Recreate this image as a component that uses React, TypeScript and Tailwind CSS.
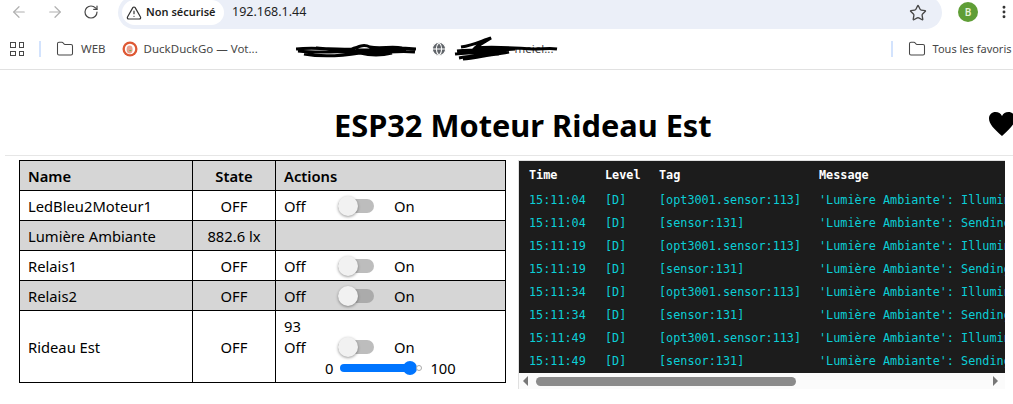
import React from "react";
import { ArrowLeft, ArrowRight, RotateCw, TriangleAlert, Star, Folder, EllipsisVertical, Globe } from "lucide-react";

const logRows = [
  ["15:11:04", "[opt3001.sensor:113]", "'Lumière Ambiante': Illumination"],
  ["15:11:04", "[sensor:131]", "'Lumière Ambiante': Sending state"],
  ["15:11:19", "[opt3001.sensor:113]", "'Lumière Ambiante': Illumination"],
  ["15:11:19", "[sensor:131]", "'Lumière Ambiante': Sending state"],
  ["15:11:34", "[opt3001.sensor:113]", "'Lumière Ambiante': Illumination"],
  ["15:11:34", "[sensor:131]", "'Lumière Ambiante': Sending state"],
  ["15:11:49", "[opt3001.sensor:113]", "'Lumière Ambiante': Illumination"],
  ["15:11:49", "[sensor:131]", "'Lumière Ambiante': Sending state"],
];

function ScribbleOne() {
  return (
    <svg width="120" height="28" viewBox="0 0 120 28" className="shrink-0">
      <path
        d="M0 14 C20 12 38 15 56 14 C64 11 68 9 74 12 C84 14 96 11 106 13 L120 14 M2 16 C30 19 50 15 70 17 C85 19 100 15 119 17 M8 19 C25 22 45 21 64 18 C72 20 84 21 96 18 M20 13 L60 16 M60 15 L110 15"
        fill="none"
        stroke="#000"
        strokeWidth="3"
      />
    </svg>
  );
}

function ScribbleTwo() {
  return (
    <svg width="108" height="30" viewBox="0 0 108 30" className="relative z-10 shrink-0">
      <path
        d="M8 13 C22 11 30 6 38 4 C30 9 24 12 22 14 C40 12 60 14 80 15 C90 15 98 14 104 15 M4 17 C24 15 44 17 62 15 M2 20 C20 18 40 19 56 18 C40 21 20 22 10 25 C22 24 34 21 46 20 M6 24 C16 22 26 22 34 21"
        fill="none"
        stroke="#000"
        strokeWidth="3"
      />
    </svg>
  );
}

function Toggle({ shaded }: { shaded?: boolean }) {
  return (
    <span className="relative ml-[34px] mr-[20px] inline-flex h-[20px] w-[36px] shrink-0 items-center">
      <span className={shaded ? "h-[14px] w-full rounded-full bg-[#ababab]" : "h-[14px] w-full rounded-full bg-[#bdbdbd]"} />
      <span className="absolute left-0 top-0 h-[20px] w-[20px] rounded-full bg-[#f1f1f1] shadow-[0_1px_3px_rgba(0,0,0,0.4)]" />
    </span>
  );
}

function Actions({ shaded }: { shaded?: boolean }) {
  return (
    <div className="flex items-center">
      <span className="w-[20px]">Off</span>
      <Toggle shaded={shaded} />
      <span>On</span>
    </div>
  );
}

const cell = "border border-black px-2 pt-[1px] h-[30px]";

export default function App() {
  return (
    <div className="h-[404px] w-[1013px] overflow-hidden bg-white font-['Noto_Sans',sans-serif] text-black">
      {/* Browser toolbar */}
      <div className="flex h-[29px] items-center overflow-hidden pb-[5px]">
        <ArrowLeft className="ml-[10px] h-[18px] w-[18px] text-[#b0b0b0]" strokeWidth={1.6} />
        <ArrowRight className="ml-[18px] h-[18px] w-[18px] text-[#b0b0b0]" strokeWidth={1.6} />
        <RotateCw className="ml-[19px] h-[16px] w-[16px] text-[#474747]" strokeWidth={1.8} />
        <div className="ml-[19px] -mt-[4px] flex h-[33px] w-[824px] items-center self-start rounded-full bg-[#ebeff8]">
          <div className="ml-[4px] flex h-[25px] w-[102px] items-center rounded-full bg-white pl-[4px]">
            <TriangleAlert className="h-[16px] w-[16px] text-[#333]" strokeWidth={1.8} />
            <span className="ml-[4px] whitespace-nowrap text-[11px] font-semibold text-[#1f1f1f]">Non sécurisé</span>
          </div>
          <span className="ml-[8px] text-[12.5px] text-[#1f1f1f]">192.168.1.44</span>
          <Star className="ml-auto mr-[15px] h-[18px] w-[18px] text-[#474747]" strokeWidth={1.8} />
        </div>
        <div className="ml-[16px] flex h-[20px] w-[20px] items-center justify-center rounded-full bg-[#5f9e36] text-[10px] font-semibold text-[#e6f4d8]">
          B
        </div>
        <EllipsisVertical className="ml-[18px] h-[16px] w-[16px] text-[#333]" strokeWidth={2.4} />
      </div>

      {/* Bookmarks bar */}
      <div className="flex h-[41px] items-center border-b border-[#e1e1e1] text-[11.5px] text-[#474747]">
        <div className="ml-[10px] grid h-[14px] w-[14px] grid-cols-2 gap-[3px]">
          <span className="border-[1.5px] border-[#474747]" />
          <span className="border-[1.5px] border-[#474747]" />
          <span className="border-[1.5px] border-[#474747]" />
          <span className="border-[1.5px] border-[#474747]" />
        </div>
        <span className="ml-[15px] h-[16px] w-[2px] bg-[#d3e3fd]" />
        <Folder className="ml-[15px] h-[18px] w-[18px]" strokeWidth={1.4} />
        <span className="ml-[7px]">WEB</span>
        <svg width="16" height="16" viewBox="0 0 16 16" className="ml-[16px] shrink-0">
          <circle cx="8" cy="8" r="7.5" fill="#de5833" />
          <circle cx="8" cy="8" r="5.2" fill="#fff" />
          <ellipse cx="7.6" cy="8.5" rx="3" ry="4" fill="#e8a090" />
          <path d="M7 9h3l-2 1.6z" fill="#65bc46" />
        </svg>
        <span className="ml-[6px] w-[152px] whitespace-nowrap">DuckDuckGo — Vot...</span>
        <ScribbleOne />
        <Globe className="ml-[15px] h-[16px] w-[16px] fill-[#5f6368] text-white" strokeWidth={1.6} />
        <span className="ml-[6px]"><ScribbleTwo /></span>
        <span className="-ml-[46px] w-[376px] whitespace-nowrap">meiel...</span>
        <span className="h-[16px] w-[2px] bg-[#d3e3fd]" />
        <Folder className="ml-[15px] h-[18px] w-[18px]" strokeWidth={1.4} />
        <span className="ml-[7px] whitespace-nowrap text-[11px]">Tous les favoris</span>
      </div>

      {/* Page */}
      <div className="flex h-[85px] items-end overflow-hidden pb-[10px]">
        <h1 className="ml-[334px] w-[377px] whitespace-nowrap text-[30.75px] font-bold leading-[40px]">ESP32 Moteur Rideau Est</h1>
        <svg width="28" height="26" viewBox="0 0 28 26" className="mb-[8px] ml-[277px] shrink-0">
          <path d="M14 25 C6 18 1 13 1 7.5 C1 3.5 4 1 7.5 1 C10.5 1 12.8 2.6 14 5 C15.2 2.6 17.5 1 20.5 1 C24 1 27 3.5 27 7.5 C27 13 22 18 14 25Z" fill="#000" />
        </svg>
      </div>
      <div className="ml-[5px] h-[1px] bg-[#e6e6e6]" />

      <div className="mt-[4px] flex items-start pl-[19px]">
        <table className="w-[487px] table-fixed border-collapse text-[14.75px]">
          <colgroup>
            <col className="w-[173px]" />
            <col className="w-[83px]" />
            <col />
          </colgroup>
          <tbody>
            <tr className="bg-[#d6d6d6] font-semibold">
              <td className={cell}>Name</td>
              <td className={`${cell} text-center`}>State</td>
              <td className={cell}>Actions</td>
            </tr>
            <tr>
              <td className={cell}>LedBleu2Moteur1</td>
              <td className={`${cell} text-center`}>OFF</td>
              <td className={cell}><Actions /></td>
            </tr>
            <tr className="bg-[#d6d6d6]">
              <td className={cell}>Lumière Ambiante</td>
              <td className={`${cell} text-center`}>882.6 lx</td>
              <td className={cell} />
            </tr>
            <tr>
              <td className={cell}>Relais1</td>
              <td className={`${cell} text-center`}>OFF</td>
              <td className={cell}><Actions /></td>
            </tr>
            <tr className="bg-[#d6d6d6]">
              <td className={cell}>Relais2</td>
              <td className={`${cell} text-center`}>OFF</td>
              <td className={cell}><Actions shaded /></td>
            </tr>
            <tr>
              <td className={`${cell} h-[72px]`}>Rideau Est</td>
              <td className={`${cell} h-[72px] text-center`}>OFF</td>
              <td className="h-[72px] border border-black px-2 pt-[1px]">
                <div className="leading-[20px]">93</div>
                <Actions />
                <div className="flex h-[20px] items-center">
                  <span className="ml-[41px]">0</span>
                  <span className="relative ml-[7px] flex h-[14px] w-[82px] items-center">
                    <span className="h-[8px] w-[76px] rounded-full bg-[#0075ff]" />
                    <span className="absolute left-[63px] top-0 h-[14px] w-[14px] rounded-full bg-[#0075ff]" />
                    <span className="absolute right-0 top-[4px] h-[6px] w-[6px] rounded-full border border-[#aaa] bg-white" />
                  </span>
                  <span className="ml-[8px]">100</span>
                </div>
              </td>
            </tr>
          </tbody>
        </table>

        {/* Log panel */}
        <div className="ml-[12px] w-[487px] border-t border-l border-[#e0e0e0]">
          <div className="h-[212px] overflow-hidden bg-[#1c1c1c] pl-[10px] pt-[3px] font-['DejaVu_Sans_Mono',monospace] text-[11.8px] leading-[23px] text-[#0bced6]">
            <div className="grid h-[25px] w-[640px] grid-cols-[76px_54px_160px_1fr] whitespace-nowrap font-bold text-white">
              <span>Time</span>
              <span>Level</span>
              <span>Tag</span>
              <span>Message</span>
            </div>
            {logRows.map((row, i) => (
              <div key={i} className="grid w-[640px] grid-cols-[76px_54px_160px_1fr] whitespace-nowrap">
                <span>{row[0]}</span>
                <span>[D]</span>
                <span>{row[1]}</span>
                <span>{row[2]}</span>
              </div>
            ))}
          </div>
          <div className="flex h-[16px] items-center bg-[#fbfbfb]">
            <span className="ml-[4px] h-0 w-0 border-y-[5px] border-r-[5px] border-y-transparent border-r-[#777]" />
            <span className="ml-[8px] h-[9px] w-[260px] rounded-full bg-[#8b8b8b]" />
            <span className="ml-[197px] h-0 w-0 border-y-[5px] border-l-[5px] border-y-transparent border-l-[#777]" />
          </div>
        </div>
      </div>
    </div>
  );
}
